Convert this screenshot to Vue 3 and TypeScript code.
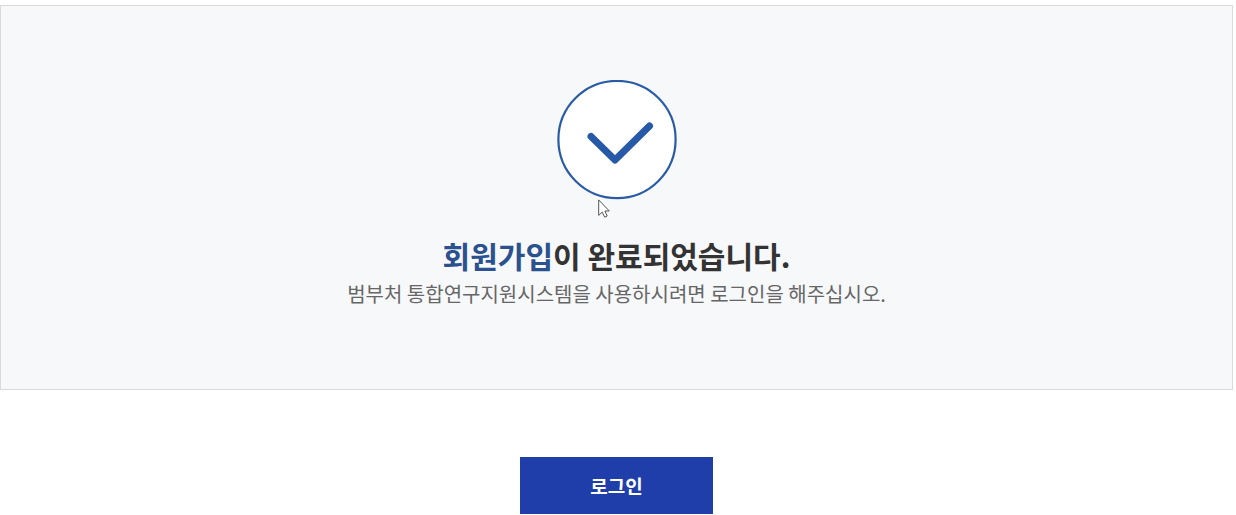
<script setup lang="ts">
const service = '범부처 통합연구지원시스템'

function goToLogin(): void {
  window.location.hash = 'login'
}
</script>

<template>
  <main class="page">
    <section class="panel">
      <div class="emblem">
        <svg class="check" viewBox="0 0 120 120" aria-hidden="true">
          <circle cx="60" cy="59.5" r="58.6" fill="#fff" stroke="#2a5ca6" stroke-width="2.2" />
          <path d="M34 56.5 L58 80 L92.5 46" fill="none" stroke="#2659a7" stroke-width="7" stroke-linecap="round" stroke-linejoin="round" />
        </svg>
        <svg class="pointer" viewBox="0 0 12 19" aria-hidden="true">
          <path d="M.7 .9 V16.4 L4.2 13.1 L6.7 18.2 L9.2 17 L6.9 12 H11.3 Z" fill="#fff" stroke="#555" stroke-width="1" stroke-linejoin="round" />
        </svg>
      </div>
      <h1 class="title"><strong>회원가입</strong>이 완료되었습니다.</h1>
      <p class="guide">{{ service }}을 사용하시려면 로그인을 해주십시오.</p>
    </section>
    <button class="login" type="button" @click="goToLogin">로그인</button>
  </main>
</template>

<style>
body {
  background: #fff;
}
</style>

<style scoped>
.page {
  display: flex;
  flex-direction: column;
  align-items: center;
  padding: 5px 3px 0 0;
  font-family: "Noto Sans CJK KR", sans-serif;
}

.panel {
  box-sizing: border-box;
  width: 100%;
  display: flex;
  flex-direction: column;
  align-items: center;
  padding: 74px 20px 76px;
  border: 1px solid #d9dadc;
  background: #f6f8fa;
  text-align: center;
}

.emblem {
  position: relative;
  width: 120px;
  height: 120px;
}

.check {
  display: block;
  width: 100%;
  height: 100%;
}

.pointer {
  position: absolute;
  left: 41px;
  top: 119px;
  width: 12px;
  height: 19px;
}

.title {
  margin: 35px 0 0;
  color: #333;
  font-size: 30px;
  font-weight: 700;
  line-height: 40px;
}

.title strong {
  color: #2c518f;
  font-weight: 700;
}

.guide {
  margin: 0;
  color: #666;
  font-size: 20px;
  line-height: 38px;
}

.login {
  width: 193px;
  height: 57px;
  margin-top: 67px;
  padding: 0;
  border: 0;
  background: #203eaa;
  color: #fff;
  font-family: inherit;
  font-size: 19px;
  font-weight: 700;
  cursor: pointer;
}
</style>
